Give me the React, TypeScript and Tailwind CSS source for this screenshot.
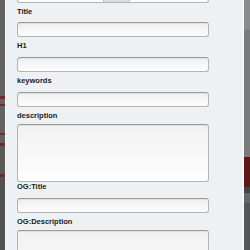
import React from "react";

const inputCls =
  "block shrink-0 w-[192px] h-[15px] ml-[11px] rounded-[3px] border border-[#b4b4b4] border-t-[#9a9a9a] bg-gradient-to-b from-[#efefef] to-[#fefefe] shadow-[inset_0_1px_1px_rgba(0,0,0,0.07)]";
const areaCls =
  "block shrink-0 w-[192px] ml-[11px] rounded-[3px] border border-[#b4b4b4] border-t-[#9a9a9a] bg-gradient-to-b from-[#f1f1f1] to-[#fefefe] shadow-[inset_0_1px_1px_rgba(0,0,0,0.07)]";
const labelCls =
  "block shrink-0 ml-[11px] h-[10px] leading-[10px] text-[7.5px] font-bold text-[#1a1a1a]";

function Label({ children, mt }: { children: React.ReactNode; mt: string }) {
  return <div className={`${labelCls} ${mt}`}>{children}</div>;
}

export default function App() {
  return (
    <div
      className="w-[250px] h-[250px] overflow-hidden flex bg-[#eef2f5]"
      style={{ fontFamily: '"Liberation Sans", Arial, sans-serif' }}
    >
      {/* left background strip */}
      <div className="w-[5px] h-full flex flex-col bg-[#626262] shrink-0">
        <div className="h-[96px] shrink-0" />
        <div className="h-[3px] shrink-0 bg-[#7a2626]" />
        <div className="h-[5px] shrink-0" />
        <div className="h-[2px] shrink-0 bg-[#6e2a2a]" />
        <div className="h-[27px] shrink-0" />
        <div className="h-[2px] shrink-0 bg-[#7a2626]" />
        <div className="h-[8px] shrink-0" />
        <div className="h-[3px] shrink-0 bg-[#7a2626]" />
        <div className="h-[28px] shrink-0 bg-[#595959]" />
        <div className="h-[3px] shrink-0 bg-[#7a2626]" />
        <div className="flex-1 bg-[#525252]" />
      </div>
      <div className="w-[1px] h-full bg-[#f7f8f9] shrink-0" />

      {/* panel */}
      <div className="w-[237px] h-full shrink-0 bg-[#edf1f4] flex flex-col">
        <div className={`${inputCls} mt-[-12px] relative overflow-hidden`}>
          <div className="absolute left-[85px] top-0 w-[27px] h-full bg-[#dcdcdc] border-x border-[#c2c2c2]" />
        </div>
        <Label mt="mt-[4px]">Title</Label>
        <div className={`${inputCls} mt-[5px]`} />
        <Label mt="mt-[4px]">H1</Label>
        <div className={`${inputCls} mt-[6px]`} />
        <Label mt="mt-[4px]">keywords</Label>
        <div className={`${inputCls} mt-[6px]`} />
        <Label mt="mt-[4px]">description</Label>
        <div className={`${areaCls} h-[58px] mt-[3px]`} />
        <Label mt="mt-[0px]">OG:Title</Label>
        <div className={`${inputCls} mt-[6px]`} />
        <Label mt="mt-[4px]">OG:Description</Label>
        <div className={`${areaCls} h-[58px] mt-[3px]`} />
      </div>

      <div className="w-[1px] h-full bg-[#fbfcfd] shrink-0" />
      {/* right background strip */}
      <div className="flex-1 h-full flex flex-col bg-[#7a7a7a]">
        <div className="h-[30px] shrink-0 bg-[#8a8a8a]" />
        <div className="h-[127px] shrink-0" />
        <div className="h-[30px] shrink-0 bg-[#5e1717]" />
        <div className="h-[6px] shrink-0 bg-[#444]" />
        <div className="h-[10px] shrink-0 bg-[#666]" />
        <div className="flex-1 bg-[#555]" />
      </div>
    </div>
  );
}
